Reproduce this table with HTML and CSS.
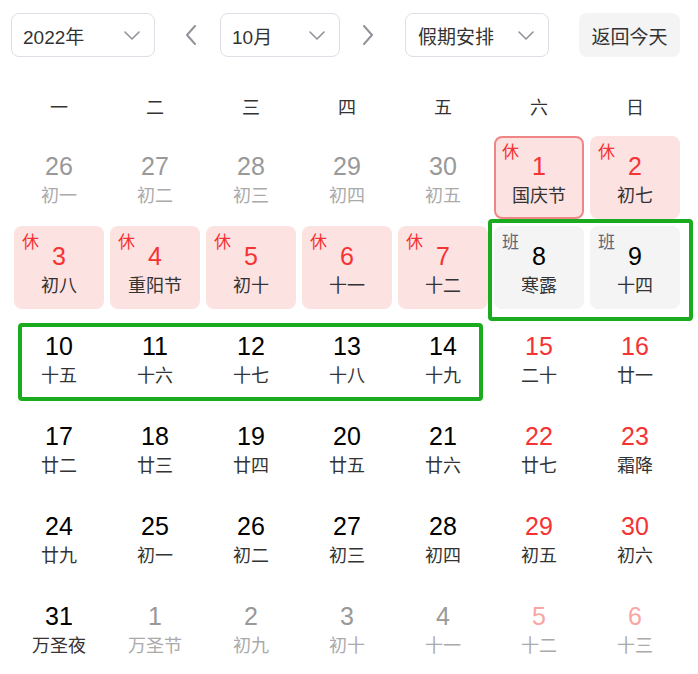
FILE: index.html
```html
<!DOCTYPE html>
<html lang="zh-CN">
<head>
<meta charset="utf-8">
<title>日历</title>
<link rel="stylesheet" href="styles.css">
</head>
<body>
<div class="page">
  <div class="toolbar">
    <div class="select sel-year"><span>2022年</span><svg class="chev" width="16" height="9" viewBox="0 0 16 9"><polyline points="1,1 8,8 15,1"/></svg></div>
    <svg class="arrow arrow-prev" width="12" height="20" viewBox="0 0 12 20"><polyline points="10,1 2,10 10,19"/></svg>
    <div class="select sel-month"><span>10月</span><svg class="chev" width="16" height="9" viewBox="0 0 16 9"><polyline points="1,1 8,8 15,1"/></svg></div>
    <svg class="arrow arrow-next" width="12" height="20" viewBox="0 0 12 20"><polyline points="2,1 10,10 2,19"/></svg>
    <div class="select sel-holiday"><span>假期安排</span><svg class="chev" width="16" height="9" viewBox="0 0 16 9"><polyline points="1,1 8,8 15,1"/></svg></div>
    <div class="btn-today">返回今天</div>
  </div>

  <div class="weekdays">
    <div>一</div><div>二</div><div>三</div><div>四</div><div>五</div><div>六</div><div>日</div>
  </div>

  <div class="grid">
    <div class="cell other"><div class="num">26</div><div class="lunar">初一</div></div>
    <div class="cell other"><div class="num">27</div><div class="lunar">初二</div></div>
    <div class="cell other"><div class="num">28</div><div class="lunar">初三</div></div>
    <div class="cell other"><div class="num">29</div><div class="lunar">初四</div></div>
    <div class="cell other"><div class="num">30</div><div class="lunar">初五</div></div>
    <div class="cell rest selected"><span class="tag">休</span><div class="num">1</div><div class="lunar">国庆节</div></div>
    <div class="cell rest"><span class="tag">休</span><div class="num">2</div><div class="lunar">初七</div></div>

    <div class="cell rest"><span class="tag">休</span><div class="num">3</div><div class="lunar">初八</div></div>
    <div class="cell rest"><span class="tag">休</span><div class="num">4</div><div class="lunar">重阳节</div></div>
    <div class="cell rest"><span class="tag">休</span><div class="num">5</div><div class="lunar">初十</div></div>
    <div class="cell rest"><span class="tag">休</span><div class="num">6</div><div class="lunar">十一</div></div>
    <div class="cell rest"><span class="tag">休</span><div class="num">7</div><div class="lunar">十二</div></div>
    <div class="cell work"><span class="tag">班</span><div class="num">8</div><div class="lunar">寒露</div></div>
    <div class="cell work"><span class="tag">班</span><div class="num">9</div><div class="lunar">十四</div></div>

    <div class="cell"><div class="num">10</div><div class="lunar">十五</div></div>
    <div class="cell"><div class="num">11</div><div class="lunar">十六</div></div>
    <div class="cell"><div class="num">12</div><div class="lunar">十七</div></div>
    <div class="cell"><div class="num">13</div><div class="lunar">十八</div></div>
    <div class="cell"><div class="num">14</div><div class="lunar">十九</div></div>
    <div class="cell weekend"><div class="num">15</div><div class="lunar">二十</div></div>
    <div class="cell weekend"><div class="num">16</div><div class="lunar">廿一</div></div>

    <div class="cell"><div class="num">17</div><div class="lunar">廿二</div></div>
    <div class="cell"><div class="num">18</div><div class="lunar">廿三</div></div>
    <div class="cell"><div class="num">19</div><div class="lunar">廿四</div></div>
    <div class="cell"><div class="num">20</div><div class="lunar">廿五</div></div>
    <div class="cell"><div class="num">21</div><div class="lunar">廿六</div></div>
    <div class="cell weekend"><div class="num">22</div><div class="lunar">廿七</div></div>
    <div class="cell weekend"><div class="num">23</div><div class="lunar">霜降</div></div>

    <div class="cell"><div class="num">24</div><div class="lunar">廿九</div></div>
    <div class="cell"><div class="num">25</div><div class="lunar">初一</div></div>
    <div class="cell"><div class="num">26</div><div class="lunar">初二</div></div>
    <div class="cell"><div class="num">27</div><div class="lunar">初三</div></div>
    <div class="cell"><div class="num">28</div><div class="lunar">初四</div></div>
    <div class="cell weekend"><div class="num">29</div><div class="lunar">初五</div></div>
    <div class="cell weekend"><div class="num">30</div><div class="lunar">初六</div></div>

    <div class="cell"><div class="num">31</div><div class="lunar">万圣夜</div></div>
    <div class="cell other"><div class="num">1</div><div class="lunar">万圣节</div></div>
    <div class="cell other"><div class="num">2</div><div class="lunar">初九</div></div>
    <div class="cell other"><div class="num">3</div><div class="lunar">初十</div></div>
    <div class="cell other"><div class="num">4</div><div class="lunar">十一</div></div>
    <div class="cell other weekend"><div class="num">5</div><div class="lunar">十二</div></div>
    <div class="cell other weekend"><div class="num">6</div><div class="lunar">十三</div></div>
  </div>

  <div class="mark mark-weekend-work"></div>
  <div class="mark mark-week"></div>
</div>
</body>
</html>
```

FILE: styles.css
```css
* { box-sizing: border-box; }
html, body { margin: 0; padding: 0; background: #fff; }
body {
  font-family: "Liberation Sans", "Noto Sans CJK SC", sans-serif;
  color: #333;
}
.page {
  position: relative;
  width: 698px;
  height: 674px;
  overflow: hidden;
}
.toolbar {
  display: flex;
  align-items: center;
  height: 44px;
  margin-top: 13px;
  padding-left: 11px;
}
.select {
  display: flex;
  align-items: center;
  justify-content: space-between;
  height: 44px;
  border: 1px solid #dcdfe6;
  border-radius: 8px;
  padding: 0 14px 0 11px;
  font-size: 19px;
  color: #333;
}
.sel-year { width: 144px; }
.sel-month { width: 120px; margin-left: 23px; }
.sel-holiday { width: 144px; margin-left: 31px; padding-left: 12px; }
.chev polyline, .arrow polyline {
  fill: none;
  stroke: #909399;
  stroke-width: 1.6;
  stroke-linecap: round;
  stroke-linejoin: round;
}
.arrow polyline { stroke-width: 2; }
.arrow-prev { margin-left: 30px; }
.arrow-next { margin-left: 22px; }
.btn-today {
  margin-left: 30px;
  width: 101px;
  height: 44px;
  border-radius: 8px;
  background: #f4f4f5;
  display: flex;
  align-items: center;
  justify-content: center;
  font-size: 19px;
  color: #333;
}
.weekdays {
  display: grid;
  grid-template-columns: repeat(7, 90px);
  column-gap: 6px;
  padding-left: 14px;
  margin-top: 29px;
  height: 40px;
  align-items: center;
}
.weekdays div {
  text-align: center;
  font-size: 18px;
  color: #333;
}
.grid {
  display: grid;
  grid-template-columns: repeat(7, 90px);
  grid-auto-rows: 83px;
  column-gap: 6px;
  row-gap: 7px;
  padding-left: 14px;
  margin-top: 10px;
}
.cell {
  position: relative;
  border-radius: 8px;
  text-align: center;
  padding-top: 15px;
}
.num {
  font-size: 25px;
  line-height: 30px;
  color: #000;
}
.lunar {
  font-size: 18px;
  line-height: 31px;
  color: #333;
}
.tag {
  position: absolute;
  left: 8px;
  top: 7px;
  font-size: 17px;
  line-height: 20px;
}
.rest { background: #fde2e2; }
.rest .num, .rest .tag { color: #f53333; }
.selected { border: 2px solid #f08585; padding-top: 13px; }
.selected .tag { left: 6px; top: 5px; }
.work { background: #f4f4f5; }
.work .tag { color: #5f6577; }
.weekend .num { color: #f53333; }
.other .num { color: #999; }
.other .lunar { color: #aaa; }
.other.weekend .num { color: #f9a5a5; }
.mark {
  position: absolute;
  border: 4px solid #1aab1f;
  border-radius: 4px;
}
.mark-weekend-work { left: 488px; top: 219px; width: 205px; height: 102px; }
.mark-week { left: 18px; top: 323px; width: 465px; height: 78px; }
```
